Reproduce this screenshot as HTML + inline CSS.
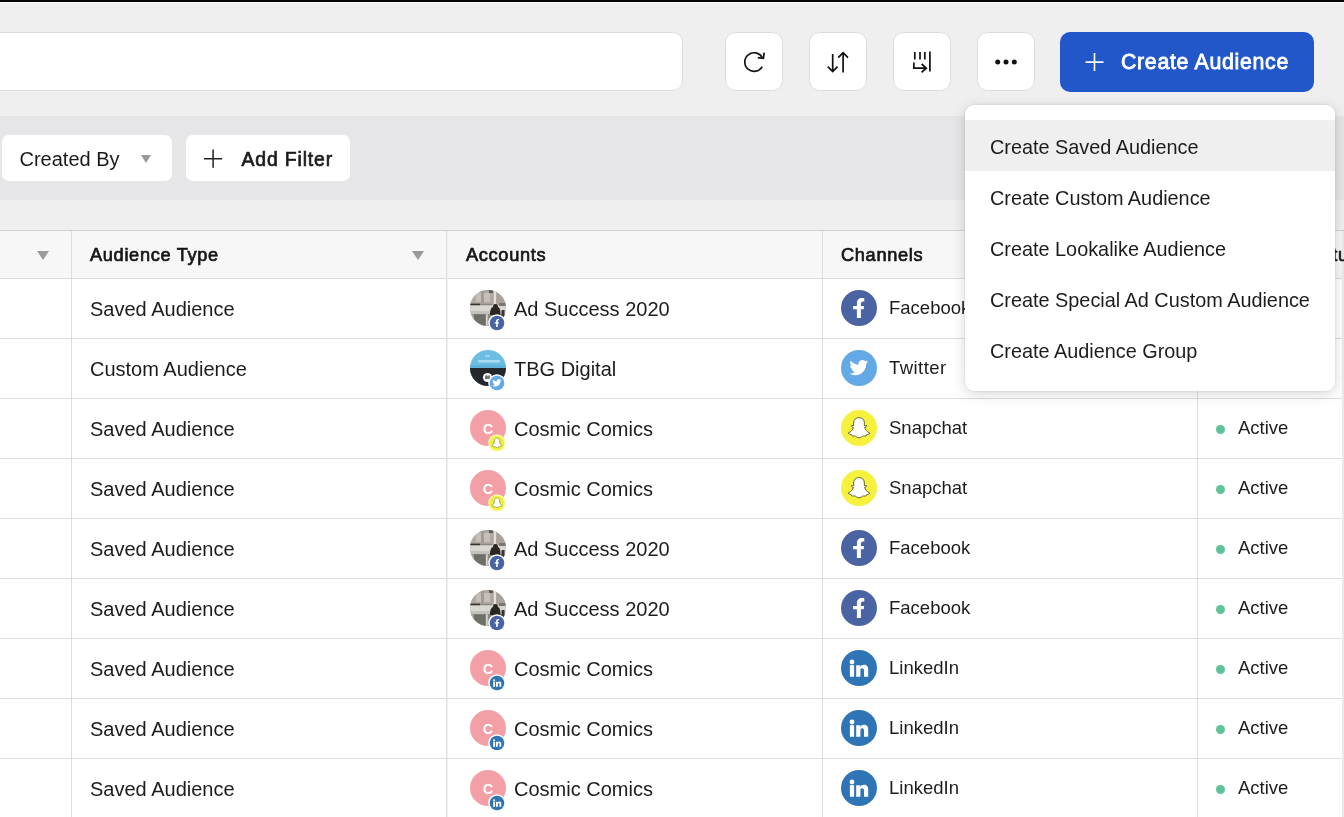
<!DOCTYPE html>
<html>
<head>
<meta charset="utf-8">
<title>Audiences</title>
<style>
*{box-sizing:border-box;margin:0;padding:0}
html,body{width:1344px;height:817px;overflow:hidden}
body{font-family:"Liberation Sans",sans-serif;background:#efefef;color:#1a1a1a;position:relative}
.abs{position:absolute}
.tbl,.menu,.chip,.cbtn{will-change:transform}
.topline{left:0;top:0;width:1344px;height:2px;background:#050505}
.topwhite{left:0;top:2px;width:1344px;height:1px;background:#fbfbfb}
.search{left:-20px;top:32px;width:703px;height:59px;background:#fff;border:1px solid #dedede;border-radius:10px}
.ibtn{top:32.250px;width:58.500px;height:58.500px;background:#fff;border:1px solid #dcdcdc;border-radius:10.500px}
.ibtn svg{position:absolute;left:-1px;top:-0.750px}
.cbtn{left:1060px;top:31.5px;width:254px;height:60px;background:#2257c9;border-radius:10px;color:#fff}
.cbtn span{position:absolute;left:61px;top:18px;font-size:21.300px;-webkit-text-stroke:0.800px #fff;letter-spacing:0.700px;white-space:nowrap}
.fbar{left:0;top:116px;width:1344px;height:84px;background:#e6e6e8}
.chip{top:134.500px;height:46px;background:#fff;border-radius:7px;font-size:20px;white-space:nowrap}
.chip span{position:absolute;top:13px}
.tbl{left:0;top:231px;width:1344px;height:600px;background:#fff}
.hdr{left:0;top:-1px;width:1344px;height:49px;background:#f7f7f8;border-top:1px solid #d2d2d5;border-bottom:1px solid #dadadc}
.vl{top:0;width:1px;height:600px;background:#dddddf}
.hl{left:0;width:1342px;height:1px;background:#dddddf}
.th{top:13.500px;font-size:18.200px;font-weight:normal;-webkit-text-stroke:0.700px #161616;letter-spacing:0.680px;white-space:nowrap;color:#161616}
.tri{width:0;height:0;border-left:6.500px solid transparent;border-right:6.500px solid transparent;border-top:9px solid #9a9a9d}
.cell{font-size:20px;white-space:nowrap;color:#1c1c1c;transform:translateY(0.600px)}
.c2{font-size:18.500px;transform:translateY(0.300px)}
.av{width:36px;height:36px;border-radius:50%;overflow:hidden}
.badge{width:16px;height:16px;border-radius:50%;border:1.5px solid #fff}
.ch{width:36px;height:36px;border-radius:50%}
.dot{width:9px;height:9px;border-radius:50%;background:#5fc39a}
.menu{left:965px;top:104.500px;width:370px;height:285.500px;background:#fff;border-radius:9px;box-shadow:0 3px 14px rgba(0,0,0,.16),0 0 3px rgba(0,0,0,.10)}
.mi{left:0;width:370px;height:51px;font-size:19.850px;white-space:nowrap;color:#1c1c1c}
.mi span{position:absolute;left:25px;top:15.500px}
.mi.sel{background:#efefef}
</style>
</head>
<body>
<svg width="0" height="0" style="position:absolute">
<defs>
<clipPath id="clipc"><circle cx="18" cy="18" r="18"/></clipPath>
<symbol id="av-ad" viewBox="0 0 36 36">
<filter id="blr" x="-10%" y="-10%" width="120%" height="120%"><feGaussianBlur stdDeviation="0.450"/></filter>
<g clip-path="url(#clipc)">
<rect width="36" height="36" fill="#b3aaa3"/>
<g filter="url(#blr)">
<rect x="-2" y="-2" width="40" height="17" fill="#b1a79f"/>
<rect x="6" y="3" width="14" height="9" fill="#c6beb8"/>
<rect x="11" y="0" width="3" height="13" fill="#a39a94"/>
<rect x="19" y="0" width="4" height="3" fill="#5c5856"/>
<rect x="23.800" y="0" width="2.200" height="14" fill="#e2e0de"/>
<rect x="27" y="4" width="9" height="9" fill="#a8a19c"/>
<rect x="-2" y="13.600" width="12" height="2" fill="#35302d"/>
<rect x="10" y="13.800" width="12" height="1.400" fill="#8c8782"/>
<rect x="-2" y="15.400" width="40" height="9" fill="#d8d7d1"/>
<rect x="-2" y="21" width="24" height="3.500" fill="#c2c2ba"/>
<rect x="29" y="13" width="9" height="3" fill="#7b7672"/>
<rect x="-2" y="24.200" width="40" height="14" fill="#6e6f67"/>
<rect x="-2" y="24.200" width="6" height="14" fill="#a3a39b"/>
<rect x="15.800" y="24.200" width="2" height="14" fill="#d4d4cf"/>
<rect x="18" y="24.200" width="4" height="14" fill="#8a8a83"/>
<path d="M20 25 C20 19 21.500 17.500 23 17 C23 15 24 14 25.500 14 C27 14 28 15 28 17 C29.500 17.500 30.500 19 30.500 25 Z" fill="#2a2623"/>
<rect x="31.500" y="20" width="3" height="8" fill="#3a3633"/>
</g>
</g>
</symbol>
<symbol id="av-tbg" viewBox="0 0 36 36">
<g clip-path="url(#clipc)">
<rect width="36" height="36" fill="#6cbde2"/>
<rect y="15" width="36" height="3" fill="#5fb2da"/>
<rect y="18" width="36" height="18" fill="#25282b"/>
<rect x="8" y="10" width="22" height="2.600" rx="1" fill="#a9dcf2"/>
<rect x="15" y="5" width="5" height="1.600" fill="#a9dcf2"/>
<circle cx="17.500" cy="27.500" r="4.600" fill="#fff"/>
<rect x="15" y="25.500" width="5" height="3.600" fill="#777"/>
</g>
</symbol>
<symbol id="av-cc" viewBox="0 0 36 36">
<circle cx="18" cy="18" r="18" fill="#f29fa6"/>
<text x="18" y="23.800" text-anchor="middle" font-family="Liberation Sans, sans-serif" font-weight="bold" font-size="14.500" fill="#fff">C</text>
</symbol>
<symbol id="g-fb" viewBox="0 0 36 36">
<path d="M19.900 28 V19.200 H22.700 L23.100 16.100 H19.900 V14 C19.900 12.600 20.400 11.400 22.200 11.400 H23.300 V8.300 C22.800 8.200 21.900 8.100 21 8.100 C17.800 8.100 15.900 10.100 15.900 13.500 V16.100 H12.100 V19.200 H15.900 V28 Z" fill="#fff"/>
</symbol>
<symbol id="g-tw" viewBox="0 0 36 36">
<path transform="translate(8.400 8.300) scale(0.780)" d="M23.953 4.570a10 10 0 01-2.825.775 4.958 4.958 0 002.163-2.723c-.951.555-2.005.959-3.127 1.184a4.920 4.920 0 00-8.384 4.482C7.690 8.095 4.067 6.130 1.640 3.162a4.822 4.822 0 00-.666 2.475c0 1.710.870 3.213 2.188 4.096a4.904 4.904 0 01-2.228-.616v.060a4.923 4.923 0 003.946 4.827 4.996 4.996 0 01-2.212.085 4.936 4.936 0 004.604 3.417 9.867 9.867 0 01-6.102 2.105c-.390 0-.779-.023-1.170-.067a13.995 13.995 0 007.557 2.209c9.053 0 13.998-7.496 13.998-13.985 0-.210 0-.420-.015-.630A9.935 9.935 0 0024 4.590z" fill="#fff"/>
</symbol>
<symbol id="g-sc" viewBox="0 0 36 36">
<path d="M18 7.600 C21.500 7.600 23.400 10 23.400 13 L23.300 15.600 C24 16 24.800 15.200 25.400 15.600 C26 16.200 25 17 23.700 17.400 C24 19.500 26 22 28.600 22.800 C29.200 23.600 27.500 24.300 25.600 24.600 C25.300 25 25.400 25.800 25 26 C24 26.200 22.800 25.600 21.500 26.200 C20.500 26.800 19.500 27.800 18 27.800 C16.500 27.800 15.500 26.800 14.500 26.200 C13.200 25.600 12 26.200 11 26 C10.600 25.800 10.700 25 10.400 24.600 C8.500 24.300 6.800 23.600 7.400 22.800 C10 22 12 19.500 12.300 17.400 C11 17 10 16.200 10.600 15.600 C11.200 15.200 12 16 12.700 15.600 L12.600 13 C12.600 10 14.500 7.600 18 7.600 Z" fill="#fff" stroke="#2b2a12" stroke-width="0.700" stroke-linejoin="round"/>
</symbol>
<symbol id="g-li" viewBox="0 0 36 36">
<circle cx="11" cy="12" r="2.400" fill="#fff"/>
<rect x="8.900" y="15.200" width="4.200" height="11.600" fill="#fff"/>
<path d="M15.200 15.200 H19.200 V16.900 C19.900 15.700 21.200 14.800 23 14.800 C26.300 14.800 27.200 17 27.200 20 V26.800 H23 V20.800 C23 19.400 22.700 18.300 21.200 18.300 C19.700 18.300 19.400 19.500 19.400 20.800 V26.800 H15.200 Z" fill="#fff"/>
</symbol>
<symbol id="ch-fb" viewBox="0 0 36 36"><circle cx="18" cy="18" r="18" fill="#4963a3"/><use href="#g-fb"/></symbol>
<symbol id="ch-tw" viewBox="0 0 36 36"><circle cx="18" cy="18" r="18" fill="#62a9e6"/><use href="#g-tw"/></symbol>
<symbol id="ch-sc" viewBox="0 0 36 36"><circle cx="18" cy="18" r="18" fill="#f6f13c"/><use href="#g-sc"/></symbol>
<symbol id="ch-li" viewBox="0 0 36 36"><circle cx="18" cy="18" r="18" fill="#2f75b6"/><use href="#g-li"/></symbol>
<symbol id="bd-fb" viewBox="0 0 18 18"><circle cx="9" cy="9" r="8.800" fill="#fff"/><circle cx="9" cy="9" r="7.300" fill="#4963a3"/><use href="#g-fb" x="1.800" y="1.800" width="14.400" height="14.400"/></symbol>
<symbol id="bd-tw" viewBox="0 0 18 18"><circle cx="9" cy="9" r="8.800" fill="#fff"/><circle cx="9" cy="9" r="7.300" fill="#62a9e6"/><use href="#g-tw" x="0.250" y="0.250" width="17.500" height="17.500"/></symbol>
<symbol id="bd-sc" viewBox="0 0 18 18"><circle cx="9" cy="9" r="8.800" fill="#fbf9b0"/><circle cx="9" cy="9" r="7.300" fill="#eef03a"/><use href="#g-sc" x="0.500" y="0.500" width="17" height="17"/></symbol>
<symbol id="bd-li" viewBox="0 0 18 18"><circle cx="9" cy="9" r="8.800" fill="#fff"/><circle cx="9" cy="9" r="7.300" fill="#2f75b6"/><use href="#g-li" x="1.300" y="1.100" width="15.800" height="15.800"/></symbol>
</defs>
</svg>
<div class="abs topline"></div>
<div class="abs topwhite"></div>
<div class="abs search"></div>

<div class="abs ibtn" style="left:724.5px"><svg width="58" height="58" viewBox="0 0 58 58" fill="none" stroke="#111" stroke-width="1.700" stroke-linecap="butt"><path d="M37.300 24.700 A9.300 9.300 0 1 0 37.200 33.600"/><path d="M39.200 19.600 L38.400 25.400 L32.800 24.600"/></svg></div>
<div class="abs ibtn" style="left:808.5px"><svg width="58" height="58" viewBox="0 0 58 58" fill="none" stroke="#111" stroke-width="1.700"><path d="M23.700 21 V38.600 M18.800 33.600 L23.700 38.600 L28.600 33.600"/><path d="M34.100 39.400 V19.600 M29.200 24.600 L34.100 19.600 L39 24.600"/></svg></div>
<div class="abs ibtn" style="left:892.5px"><svg width="58" height="58" viewBox="0 0 58 58" fill="none" stroke="#111" stroke-width="1.700"><path d="M21.800 19 V26.400 M27 19 V26.400 M31.800 19 V26.400 M36.900 18.600 V38.600"/><path d="M20.900 29.600 V35.200 H33.200 M28.600 31 L33.300 35.200 L28.600 39.400"/></svg></div>
<div class="abs ibtn" style="left:976.5px"><svg width="58" height="58" viewBox="0 0 58 58" fill="#111"><circle cx="20.700" cy="29" r="2.500"/><circle cx="29" cy="29" r="2.500"/><circle cx="37.300" cy="29" r="2.500"/></svg></div>
<div class="abs cbtn"><svg class="abs" style="left:0;top:0" width="60" height="60" viewBox="0 0 60 60"><path d="M25.500 30.100 H43.500 M34.500 21.100 V39.100" stroke="#fff" stroke-width="1.600" fill="none"/></svg><span>Create Audience</span></div>

<div class="abs fbar"></div>
<div class="abs chip" style="left:1.500px;width:169.500px"><span style="left:17.500px">Created By</span><div class="abs tri" style="left:139px;top:19.500px;border-left-width:5.750px;border-right-width:5.750px;border-top-width:8px"></div></div>
<div class="abs chip" style="left:186px;width:164px"><svg class="abs" style="left:0;top:0" width="60" height="46" viewBox="0 0 60 46"><path d="M18 23.700 H36.200 M27.100 14.600 V32.800" stroke="#222" stroke-width="1.500" fill="none"/></svg><span style="left:55.500px;font-size:19.400px;-webkit-text-stroke:0.700px #1c1c1c;letter-spacing:0.860px">Add Filter</span></div>

<div class="abs tbl" id="tbl">
<div class="abs hdr"></div>
<div class="abs vl" style="left:71px"></div>
<div class="abs vl" style="left:446px;width:2px;background:linear-gradient(90deg,#e0e1e3 50%,#efeff1 50%)"></div>
<div class="abs vl" style="left:822px"></div>
<div class="abs vl" style="left:1197px"></div>
<div class="abs hl" style="top:107px"></div>
<div class="abs hl" style="top:167px"></div>
<div class="abs hl" style="top:227px"></div>
<div class="abs hl" style="top:287px"></div>
<div class="abs hl" style="top:347px"></div>
<div class="abs hl" style="top:407px"></div>
<div class="abs hl" style="top:467px"></div>
<div class="abs hl" style="top:527px"></div>
<div class="abs hl" style="top:587px"></div>
<div class="abs" style="left:1342px;top:0;width:2px;height:600px;background:#eaeaec"></div>
<div class="abs tri" style="left:37px;top:20px"></div>
<div class="abs tri" style="left:412px;top:20px"></div>
<div class="abs th" style="left:90px">Audience Type</div>
<div class="abs th" style="left:466px">Accounts</div>
<div class="abs th" style="left:841px">Channels</div>
<div class="abs th" style="left:1216px">Audience Status</div>
<!-- row 1 -->
<div class="abs cell" style="left:90px;top:66px">Saved Audience</div>
<svg class="abs" style="left:470px;top:59px" width="36" height="36" viewBox="0 0 36 36"><use href="#av-ad"/></svg>
<svg class="abs" style="left:488px;top:83.4px" width="18" height="18" viewBox="0 0 18 18"><use href="#bd-fb"/></svg>
<div class="abs cell" style="left:514px;top:66px">Ad Success 2020</div>
<svg class="abs" style="left:841px;top:59px" width="36" height="36" viewBox="0 0 36 36"><use href="#ch-fb"/></svg>
<div class="abs cell c2" style="left:889px;top:66px">Facebook</div>
<div class="abs dot" style="left:1216px;top:74px"></div>
<div class="abs cell c2" style="left:1238px;top:66px">Active</div>
<!-- row 2 -->
<div class="abs cell" style="left:90px;top:126px">Custom Audience</div>
<svg class="abs" style="left:470px;top:119px" width="36" height="36" viewBox="0 0 36 36"><use href="#av-tbg"/></svg>
<svg class="abs" style="left:488px;top:143.4px" width="18" height="18" viewBox="0 0 18 18"><use href="#bd-tw"/></svg>
<div class="abs cell" style="left:514px;top:126px">TBG Digital</div>
<svg class="abs" style="left:841px;top:119px" width="36" height="36" viewBox="0 0 36 36"><use href="#ch-tw"/></svg>
<div class="abs cell c2" style="left:889px;top:126px;letter-spacing:0.450px">Twitter</div>
<div class="abs dot" style="left:1216px;top:134px"></div>
<div class="abs cell c2" style="left:1238px;top:126px">Active</div>
<!-- row 3 -->
<div class="abs cell" style="left:90px;top:186px">Saved Audience</div>
<svg class="abs" style="left:470px;top:179px" width="36" height="36" viewBox="0 0 36 36"><use href="#av-cc"/></svg>
<svg class="abs" style="left:488px;top:203.4px" width="18" height="18" viewBox="0 0 18 18"><use href="#bd-sc"/></svg>
<div class="abs cell" style="left:514px;top:186px">Cosmic Comics</div>
<svg class="abs" style="left:841px;top:179px" width="36" height="36" viewBox="0 0 36 36"><use href="#ch-sc"/></svg>
<div class="abs cell c2" style="left:889px;top:186px">Snapchat</div>
<div class="abs dot" style="left:1216px;top:194px"></div>
<div class="abs cell c2" style="left:1238px;top:186px">Active</div>
<!-- row 4 -->
<div class="abs cell" style="left:90px;top:246px">Saved Audience</div>
<svg class="abs" style="left:470px;top:239px" width="36" height="36" viewBox="0 0 36 36"><use href="#av-cc"/></svg>
<svg class="abs" style="left:488px;top:263.4px" width="18" height="18" viewBox="0 0 18 18"><use href="#bd-sc"/></svg>
<div class="abs cell" style="left:514px;top:246px">Cosmic Comics</div>
<svg class="abs" style="left:841px;top:239px" width="36" height="36" viewBox="0 0 36 36"><use href="#ch-sc"/></svg>
<div class="abs cell c2" style="left:889px;top:246px">Snapchat</div>
<div class="abs dot" style="left:1216px;top:254px"></div>
<div class="abs cell c2" style="left:1238px;top:246px">Active</div>
<!-- row 5 -->
<div class="abs cell" style="left:90px;top:306px">Saved Audience</div>
<svg class="abs" style="left:470px;top:299px" width="36" height="36" viewBox="0 0 36 36"><use href="#av-ad"/></svg>
<svg class="abs" style="left:488px;top:323.4px" width="18" height="18" viewBox="0 0 18 18"><use href="#bd-fb"/></svg>
<div class="abs cell" style="left:514px;top:306px">Ad Success 2020</div>
<svg class="abs" style="left:841px;top:299px" width="36" height="36" viewBox="0 0 36 36"><use href="#ch-fb"/></svg>
<div class="abs cell c2" style="left:889px;top:306px">Facebook</div>
<div class="abs dot" style="left:1216px;top:314px"></div>
<div class="abs cell c2" style="left:1238px;top:306px">Active</div>
<!-- row 6 -->
<div class="abs cell" style="left:90px;top:366px">Saved Audience</div>
<svg class="abs" style="left:470px;top:359px" width="36" height="36" viewBox="0 0 36 36"><use href="#av-ad"/></svg>
<svg class="abs" style="left:488px;top:383.4px" width="18" height="18" viewBox="0 0 18 18"><use href="#bd-fb"/></svg>
<div class="abs cell" style="left:514px;top:366px">Ad Success 2020</div>
<svg class="abs" style="left:841px;top:359px" width="36" height="36" viewBox="0 0 36 36"><use href="#ch-fb"/></svg>
<div class="abs cell c2" style="left:889px;top:366px">Facebook</div>
<div class="abs dot" style="left:1216px;top:374px"></div>
<div class="abs cell c2" style="left:1238px;top:366px">Active</div>
<!-- row 7 -->
<div class="abs cell" style="left:90px;top:426px">Saved Audience</div>
<svg class="abs" style="left:470px;top:419px" width="36" height="36" viewBox="0 0 36 36"><use href="#av-cc"/></svg>
<svg class="abs" style="left:488px;top:443.4px" width="18" height="18" viewBox="0 0 18 18"><use href="#bd-li"/></svg>
<div class="abs cell" style="left:514px;top:426px">Cosmic Comics</div>
<svg class="abs" style="left:841px;top:419px" width="36" height="36" viewBox="0 0 36 36"><use href="#ch-li"/></svg>
<div class="abs cell c2" style="left:889px;top:426px">LinkedIn</div>
<div class="abs dot" style="left:1216px;top:434px"></div>
<div class="abs cell c2" style="left:1238px;top:426px">Active</div>
<!-- row 8 -->
<div class="abs cell" style="left:90px;top:486px">Saved Audience</div>
<svg class="abs" style="left:470px;top:479px" width="36" height="36" viewBox="0 0 36 36"><use href="#av-cc"/></svg>
<svg class="abs" style="left:488px;top:503.4px" width="18" height="18" viewBox="0 0 18 18"><use href="#bd-li"/></svg>
<div class="abs cell" style="left:514px;top:486px">Cosmic Comics</div>
<svg class="abs" style="left:841px;top:479px" width="36" height="36" viewBox="0 0 36 36"><use href="#ch-li"/></svg>
<div class="abs cell c2" style="left:889px;top:486px">LinkedIn</div>
<div class="abs dot" style="left:1216px;top:494px"></div>
<div class="abs cell c2" style="left:1238px;top:486px">Active</div>
<!-- row 9 -->
<div class="abs cell" style="left:90px;top:546px">Saved Audience</div>
<svg class="abs" style="left:470px;top:539px" width="36" height="36" viewBox="0 0 36 36"><use href="#av-cc"/></svg>
<svg class="abs" style="left:488px;top:563.4px" width="18" height="18" viewBox="0 0 18 18"><use href="#bd-li"/></svg>
<div class="abs cell" style="left:514px;top:546px">Cosmic Comics</div>
<svg class="abs" style="left:841px;top:539px" width="36" height="36" viewBox="0 0 36 36"><use href="#ch-li"/></svg>
<div class="abs cell c2" style="left:889px;top:546px">LinkedIn</div>
<div class="abs dot" style="left:1216px;top:554px"></div>
<div class="abs cell c2" style="left:1238px;top:546px">Active</div>
</div>

<div class="abs menu">
<div class="abs mi sel" style="top:15px"><span>Create Saved Audience</span></div>
<div class="abs mi" style="top:66px"><span>Create Custom Audience</span></div>
<div class="abs mi" style="top:117px"><span>Create Lookalike Audience</span></div>
<div class="abs mi" style="top:168px"><span>Create Special Ad Custom Audience</span></div>
<div class="abs mi" style="top:219px"><span>Create Audience Group</span></div>
</div>
</body>
</html>
